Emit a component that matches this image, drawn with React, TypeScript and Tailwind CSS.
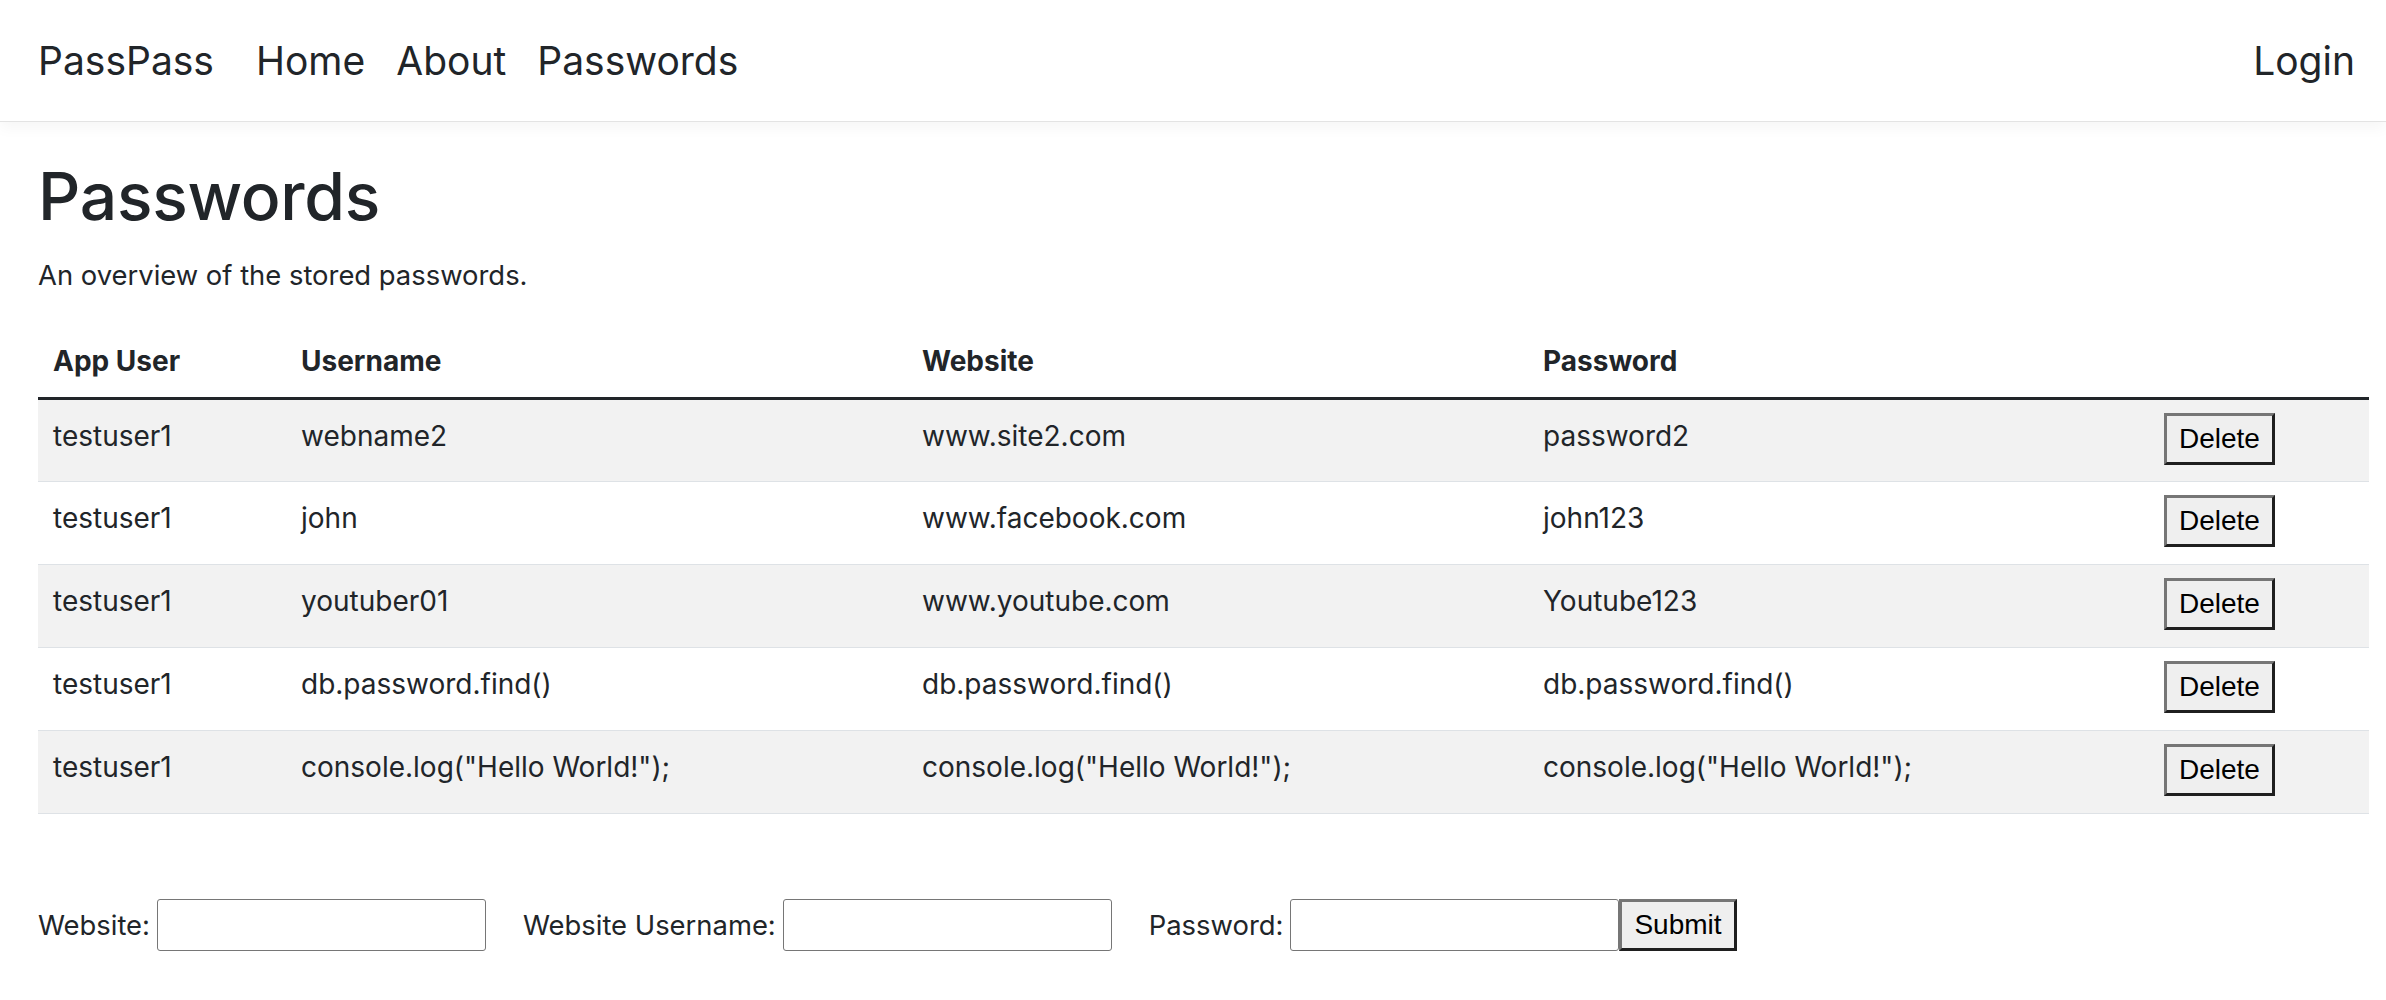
const rows = [
  { appUser: "testuser1", username: "webname2", website: "www.site2.com", password: "password2" },
  { appUser: "testuser1", username: "john", website: "www.facebook.com", password: "john123" },
  { appUser: "testuser1", username: "youtuber01", website: "www.youtube.com", password: "Youtube123" },
  { appUser: "testuser1", username: "db.password.find()", website: "db.password.find()", password: "db.password.find()" },
  {
    appUser: "testuser1",
    username: 'console.log("Hello World!");',
    website: 'console.log("Hello World!");',
    password: 'console.log("Hello World!");',
  },
];

function OutsetButton({ label }: { label: string }) {
  return (
    <button
      type="button"
      className="block h-[52px] border-[3px] border-t-[#767676] border-l-[#767676] border-r-[#1f1f1f] border-b-[#1f1f1f] bg-[#efefef] px-3 font-['Liberation_Sans',Arial,sans-serif] text-[28px] leading-[40px] text-black"
    >
      {label}
    </button>
  );
}

function Navbar() {
  return (
    <nav className="relative z-10 flex h-[122px] items-center justify-between border-b border-[#e3e3e3] bg-white pl-[38px] pr-[31px] shadow-[0_6px_14px_rgba(0,0,0,0.04)]">
      <div className="flex items-center text-[39px] leading-[60px] text-[#212529]">
        <a className="mr-[42px]">PassPass</a>
        <div className="flex gap-[31px]">
          <a>Home</a>
          <a>About</a>
          <a>Passwords</a>
        </div>
      </div>
      <a className="text-[39px] leading-[60px] text-[#212529]">Login</a>
    </nav>
  );
}

function PasswordTable() {
  const cell = "px-[15px] pt-[15px] pb-[15px] align-top";
  return (
    <table className="w-full table-fixed border-collapse text-left text-[28px] leading-[42px]">
      <colgroup>
        <col className="w-[248px]" />
        <col className="w-[621px]" />
        <col className="w-[621px]" />
        <col className="w-[621px]" />
        <col />
      </colgroup>
      <thead>
        <tr className="border-b-[3px] border-[#212529]">
          <th className={`${cell} font-bold`}>App User</th>
          <th className={`${cell} font-bold`}>Username</th>
          <th className={`${cell} font-bold`}>Website</th>
          <th className={`${cell} font-bold`}>Password</th>
          <th className={cell}></th>
        </tr>
      </thead>
      <tbody>
        {rows.map((r, i) => (
          <tr key={i} className={`h-[83px] border-b border-[#dee2e6] ${i % 2 === 0 ? "bg-[#f2f2f2]" : "bg-white"}`}>
            <td className={cell}>{r.appUser}</td>
            <td className={cell}>{r.username}</td>
            <td className={cell}>{r.website}</td>
            <td className={cell}>{r.password}</td>
            <td className="px-[15px] pt-[13px] align-top">
              <OutsetButton label="Delete" />
            </td>
          </tr>
        ))}
      </tbody>
    </table>
  );
}

function AddForm() {
  const input =
    "h-[52px] w-[329px] rounded-[3px] border border-[#767676] bg-white px-2 text-[28px] outline-none";
  return (
    <form className="mt-[85px] flex items-center text-[27.4px] leading-[42px]">
      <label className="mr-[7px]">Website:</label>
      <input className={input} />
      <label className="ml-[37px] mr-[7px]">Website Username:</label>
      <input className={input} />
      <label className="ml-[37px] mr-[7px]">Password:</label>
      <input className={input} />
      <OutsetButton label="Submit" />
    </form>
  );
}

export default function App() {
  return (
    <div className="min-h-screen bg-white font-['Inter',sans-serif] text-[#212529]">
      <Navbar />
      <main className="pl-[38px] pr-[17px] pt-[32px]">
        <h1 className="text-[66px] font-medium leading-[84px] tracking-[-0.3px]">Passwords</h1>
        <p className="mt-[16px] mb-[29px] text-[27.4px] leading-[42px]">An overview of the stored passwords.</p>
        <PasswordTable />
        <AddForm />
      </main>
    </div>
  );
}
